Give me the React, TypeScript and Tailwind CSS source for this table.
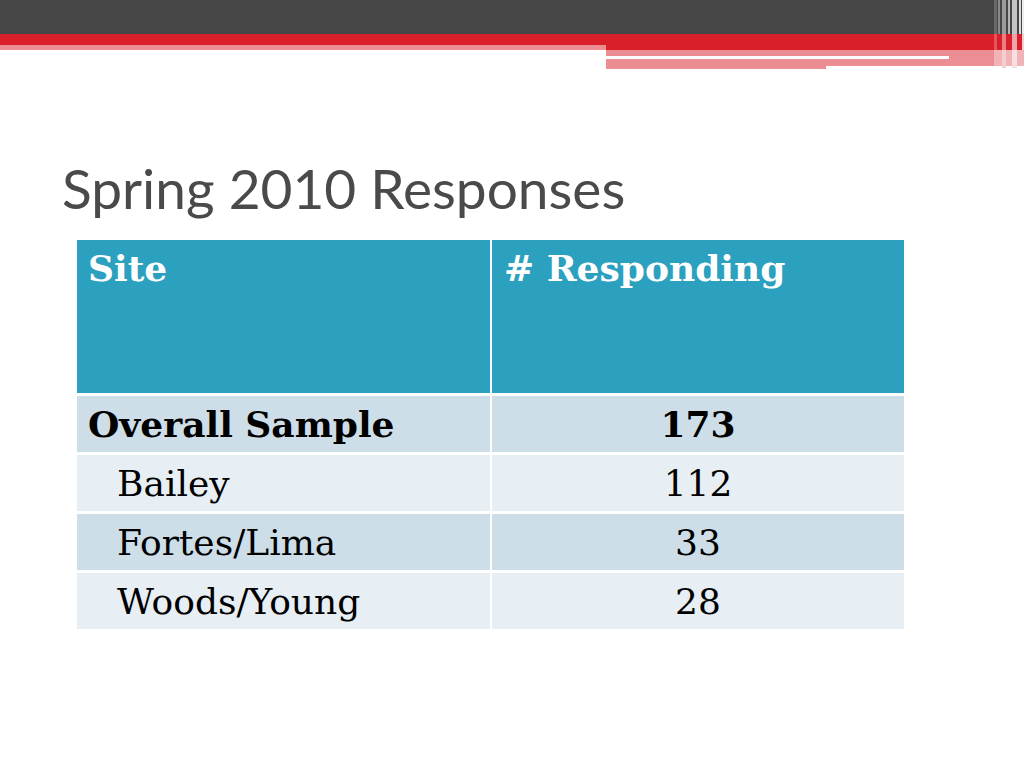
import React from 'react';

const rows = [
  { site: 'Overall Sample', count: '173', bold: true, tone: 'bg-[#cddee8]' },
  { site: 'Bailey', count: '112', bold: false, tone: 'bg-[#e7eef4]' },
  { site: 'Fortes/Lima', count: '33', bold: false, tone: 'bg-[#cddee8]' },
  { site: 'Woods/Young', count: '28', bold: false, tone: 'bg-[#e7eef4]' },
];

const serif = "font-['DejaVu_Serif',serif]";

const Header = () => (
  <div className="relative h-[70px] w-full">
    <div className="h-[34px] bg-[#464646]" />
    <div className="flex">
      <div className="flex w-[606px] flex-col">
        <div className="h-[11px] bg-[#d91f2a]" />
        <div className="h-[5px] bg-[#ec8d94]" />
      </div>
      <div className="flex flex-1 flex-col">
        <div className="h-[16px] bg-[#d91f2a]" />
        <div className="flex">
          <div className="flex w-[343px] flex-col">
            <div className="h-[6px] bg-[#ec8d94]" />
            <div className="h-[3px] bg-white" />
            <div className="flex">
              <div className="h-[10px] w-[220px] bg-[#ec8d94]" />
              <div className="h-[7px] flex-1 bg-[#ec8d94]" />
            </div>
          </div>
          <div className="h-[16px] flex-1 bg-[#ec8d94]" />
        </div>
      </div>
    </div>
    <svg
      className="absolute right-0 top-0"
      width="30"
      height="70"
      viewBox="0 0 30 70"
    >
      <rect x="0" y="0" width="3" height="34" fill="#6a6a6a" />
      <rect x="4" y="0" width="2" height="34" fill="#8a8a8a" />
      <rect x="8" y="0" width="4" height="34" fill="#9b9b9b" />
      <rect x="14" y="0" width="2" height="34" fill="#b5b5b5" />
      <rect x="18" y="0" width="5" height="34" fill="#c4c4c4" />
      <rect x="25" y="0" width="2" height="34" fill="#dadada" />
      <rect x="28" y="0" width="2" height="34" fill="#eeeeee" />
      <rect x="0" y="34" width="3" height="16" fill="#e3555d" />
      <rect x="8" y="34" width="4" height="16" fill="#ea7e85" />
      <rect x="18" y="34" width="5" height="16" fill="#f0a3a8" />
      <rect x="28" y="34" width="2" height="16" fill="#f7cfd2" />
      <rect x="0" y="50" width="30" height="16" fill="#f2b3b7" />
      <rect x="8" y="50" width="4" height="18" fill="#f6cdd0" />
      <rect x="18" y="50" width="5" height="18" fill="#f9dfe1" />
    </svg>
  </div>
);

export default function App() {
  return (
    <div className="h-[768px] w-[1024px] overflow-hidden bg-white">
      <Header />
      <h1 className="ml-[62px] mt-[91px] font-['Lato',sans-serif] text-[55px] leading-none text-[#4a4a4a]">
        Spring 2010 Responses
      </h1>
      <div className={`ml-[77px] mt-[24px] w-[827px] ${serif}`}>
        <div className="flex h-[153px] gap-[2px] bg-white">
          <div className="w-[413px] bg-[#2ba0bf] px-[11px] pt-[6px] text-[36px] font-bold leading-tight text-white">
            Site
          </div>
          <div className="flex-1 bg-[#2ba0bf] px-[12px] pt-[6px] text-[36px] font-bold leading-tight text-white">
            # Responding
          </div>
        </div>
        {rows.map((row) => (
          <div key={row.site} className="mt-[3px] flex h-[56px] gap-[2px]">
            <div
              className={`w-[413px] ${row.tone} ${
                row.bold ? 'pl-[11px] font-bold' : 'pl-[40px]'
              } pt-[6px] text-[36px] leading-tight text-black`}
            >
              {row.site}
            </div>
            <div
              className={`flex-1 ${row.tone} ${
                row.bold ? 'font-bold' : ''
              } pt-[6px] text-center text-[36px] leading-tight text-black`}
            >
              {row.count}
            </div>
          </div>
        ))}
      </div>
    </div>
  );
}
